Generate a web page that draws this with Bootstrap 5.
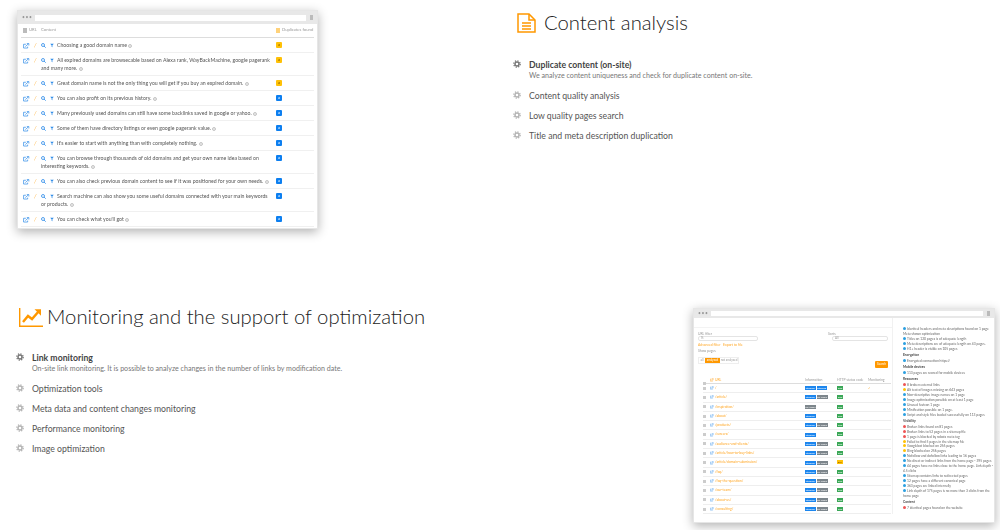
<!DOCTYPE html>
<html lang="en">
<head>
    <meta charset="UTF-8">
    <meta name="viewport" content="width=device-width, initial-scale=1.0">
    <title>Content analysis</title>
    <link href="https://cdn.jsdelivr.net/npm/bootstrap@5.3.2/dist/css/bootstrap.min.css" rel="stylesheet">
    <style>
        body {
            font-family: "Lato", "Liberation Sans", sans-serif;
            background: #fff;
            color: #444;
            overflow: hidden;
        }
        .block-one { height: 295px; }
        .block-two { height: 235px; }
        .left-one { width: 500px; padding: 10px 0 0 17px; }
        .right-one { padding: 13px 0 0 17px; }
        .left-two { width: 693px; padding: 12px 0 0 19px; }
        .feature-title {
            font-size: 20.3px;
            font-weight: 300;
            line-height: 20px;
            height: 20px;
            color: #222;
            margin: 0;
        }
        .title-text { margin-bottom: 2px; }
        .feature-list { margin: 26px 0 0 -4px; padding: 0; list-style: none; }
        .left-two .feature-list { margin: 25px 0 0 -3px; }
        .feature-list li {
            display: flex;
            gap: 8px;
            font-size: 8.7px;
            line-height: 11px;
            margin-bottom: 9px;
            color: #555;
        }
        .feature-list li svg { flex: none; margin-top: 1px; color: #b4b4b4; }
        .feature-list li.is-open { font-weight: 700; color: #444; }
        .feature-list li.is-open svg { color: #777; }
        .feature-list small {
            display: block;
            font-size: 7.1px;
            font-weight: 400;
            color: #777;
        }
        .browser {
            background: #fff;
            border: 1px solid #e6e6e6;
            box-shadow: 0 3px 10px rgba(0, 0, 0, .3);
            filter: blur(.3px);
        }
        .browser-one { width: 301px; height: 219px; }
        .browser-two { width: 302px; height: 215px; margin-top: 13px; }
        .browser-bar { background: #e8e8e8; gap: 4px; padding: 0 4px 0 4px; }
        .browser-one .browser-bar { height: 13px; }
        .browser-two .browser-bar { height: 9px; }
        .browser-dots { width: 9px; flex: none; color: #999; font-size: 5px; line-height: 5px; letter-spacing: .6px; }
        .browser-url { flex: 1; height: 6px; background: #fff; }
        .browser-two .browser-url { height: 5px; }
        .browser-end { width: 3px; height: 5px; background: #bbb; flex: none; }

        .dup-head {
            margin: 0 3px;
            height: 14px;
            border-bottom: 1px solid #ddd;
            font-size: 4.2px;
            color: #999;
            padding-left: 2px;
        }
        .dup-head .dup-content { width: 235px; }
        .dup-sort { width: 4px; height: 5px; background: #bbb; margin-right: 2px; display: inline-block; vertical-align: middle; }
        .dup-flag { width: 4px; height: 5px; background: #ffd27a; margin-right: 2px; display: inline-block; vertical-align: middle; }
        .dup-row {
            margin: 0 3px;
            padding: 3px 0 3px 2px;
            border-bottom: 1px solid #f0f0f0;
            font-size: 5.2px;
            line-height: 8px;
            color: #555;
        }
        .dup-tools { width: 18px; flex: none; }
        .dup-text { width: 234px; flex: none; padding-right: 2.5px; }
        .dup-gap { margin-right: 3px; }
        .dup-slash { color: #ffb74d; margin-left: 4px; font-style: italic; font-size: 5.9px; }
        .dup-mark {
            width: 6px;
            height: 6px;
            border-radius: 1px;
            font-size: 4px;
            line-height: 6px;
            text-align: center;
            margin: 1px 0 0 1px;
        }
        .mark-a { background: #ffc107; color: #704f00; }
        .mark-b { background: #0d7ff0; color: #fff; }
        .tone-blue { color: #2b8ae8; }
        .tone-orange { color: #ff9800; }
        .tone-gray { color: #999; }

        .audit-main { width: 199px; flex: none; border-right: 1px solid #f1f1f1; padding-top: 9px; }
        .audit-side { flex: 1; padding: 1px 0 0 10px; margin-top: 8px; font-size: 3.3px; line-height: 4.9px; color: #666; }
        .audit-side p { margin: 0; }
        .audit-side .side-head { font-weight: 700; color: #444; margin: 1.2px 0; }
        .audit-side i { display: inline-block; width: 3px; height: 3px; border-radius: 50%; margin-right: 1px; }
        .dot-ok { background: #2b9fe0; }
        .dot-bad { background: #e55; }
        .dot-warn { background: #ffc107; }
        .audit-form { border-top: 1px solid #f3f3f3; margin-top: 0; padding: 4px 4px 0 4px; font-size: 3.4px; line-height: 4px; color: #999; }
        .audit-col { width: 60px; }
        .audit-input { height: 5px; border: 1px solid #e4e4e4; border-radius: 2px; background: #fff; padding-left: 2px; font-size: 3px; line-height: 3px; }
        .audit-links { color: #ffa726; margin: 2px 0 2px; }
        .audit-group { width: 41px; height: 6.5px; border: 1px solid #eee; line-height: 4.5px; font-size: 3px; text-align: center; }
        .audit-group span:nth-child(1) { width: 6px; }
        .audit-group span:nth-child(2) { width: 15px; background: #ff9800; color: #fff; }
        .audit-group span:nth-child(3) { flex: 1; }
        .audit-search {
            background: #ff9800;
            color: #fff;
            width: 13px;
            height: 7px;
            border-radius: 1px;
            font-size: 3px;
            line-height: 7px;
            text-align: center;
            margin-left: auto;
            margin-right: 0;
        }
        .url-head, .url-row {
            margin-left: 9px;
            margin-right: 1px;
            font-size: 3.4px;
            color: #999;
            border-bottom: 1px solid #eee;
        }
        .url-head { margin-top: 10px; height: 6px; line-height: 5px; border-bottom-color: #ddd; }
        .url-row { height: 9.3px; line-height: 8.3px; }
        .url-check { width: 3px; height: 3px; background: #ccc; flex: none; margin-right: 4px; }
        .url-name { width: 95px; flex: none; color: #ffa726; }
        .url-name svg { margin-right: 1px; }
        .url-info { width: 32px; flex: none; display: flex; gap: 1px; }
        .url-http { width: 31px; flex: none; }
        .url-tag { display: inline-block; height: 4px; line-height: 4px; font-size: 2.6px; color: #fff; text-align: center; }
        .tag-blue { width: 10.5px; background: #1c86ee; }
        .tag-gray { width: 11px; background: #7d868c; }
        .tag-green { width: 6px; background: #3aa757; }
        .tag-yellow { width: 6px; background: #ffc107; color: #704f00; }
    </style>
</head>
<body>
    <svg width="0" height="0" class="d-block">
        <symbol id="ico-gear" viewBox="0 0 10 10">
            <circle cx="5" cy="5" r="2.5" fill="none" stroke="currentColor" stroke-width="1.8"/>
            <circle cx="5" cy="5" r="4" fill="none" stroke="currentColor" stroke-width="1.6" stroke-dasharray="1.57 1.57"/>
        </symbol>
        <symbol id="ico-ext" viewBox="0 0 12 10">
            <path d="M8 6v2.5H1V2h4" fill="none" stroke="currentColor" stroke-width="1.2"/>
            <path d="M4 6 9 1.5M6.5 .8h3.5v3.4" fill="none" stroke="currentColor" stroke-width="1.2"/>
        </symbol>
        <symbol id="ico-search" viewBox="0 0 10 10">
            <circle cx="4" cy="4" r="3" fill="none" stroke="currentColor" stroke-width="1.6"/>
            <path d="M6.2 6.2 9.3 9.3" stroke="currentColor" stroke-width="1.8"/>
        </symbol>
        <symbol id="ico-funnel" viewBox="0 0 10 10">
            <path d="M.5 .8h9L6 4.6v5L4 8.4V4.6z" fill="currentColor"/>
        </symbol>
        <symbol id="ico-info" viewBox="0 0 10 10">
            <circle cx="5" cy="5" r="3.8" fill="none" stroke="currentColor" stroke-width="1.4"/>
            <path d="M5 3v4" stroke="currentColor" stroke-width="1.2"/>
        </symbol>
    </svg>

    <div class="d-flex block-one">
        <div class="left-one flex-shrink-0">
            <div class="browser browser-one">
                <div class="browser-bar d-flex align-items-center">
                    <span class="browser-dots">•••</span>
                    <span class="browser-url"></span>
                    <span class="browser-end"></span>
                </div>
                <div class="dup-head d-flex align-items-center">
                    <span class="dup-tools"><span class="dup-sort"></span>URL</span>
                    <span class="dup-content">Content</span>
                    <span><span class="dup-flag"></span>Duplicates found</span>
                </div>
                <div id="dupRows"></div>
            </div>
        </div>
        <div class="right-one">
            <h2 class="feature-title d-flex align-items-center gap-2">
                <svg width="19" height="20" viewBox="0 0 19 20" fill="none" stroke="#ff9800" stroke-width="1.5">
                    <path d="M1 1h11l6 6v12H1z"/>
                    <path d="M12 1v6h6M5 10h9M5 13h9M5 16h9"/>
                </svg>
                <span class="title-text">Content analysis</span>
            </h2>
            <ul class="feature-list">
                <li class="is-open"><svg width="8" height="8"><use href="#ico-gear"/></svg><div>Duplicate content (on-site)<small>We analyze content uniqueness and check for duplicate content on-site.</small></div></li>
                <li><svg width="8" height="8"><use href="#ico-gear"/></svg><div>Content quality analysis</div></li>
                <li><svg width="8" height="8"><use href="#ico-gear"/></svg><div>Low quality pages search</div></li>
                <li><svg width="8" height="8"><use href="#ico-gear"/></svg><div>Title and meta description duplication</div></li>
            </ul>
        </div>
    </div>

    <div class="d-flex block-two">
        <div class="left-two flex-shrink-0">
            <h2 class="feature-title d-flex align-items-center gap-1">
                <svg width="24" height="19" viewBox="0 0 24 19" fill="none" stroke="#ff9800">
                    <path d="M.7 0v18.3H24" stroke-width="1.4"/>
                    <path d="M4 14l5-6 4 3 7-8" stroke-width="2.4"/>
                    <path d="M15.5 1.2h6.5v6.5z" fill="#ff9800" stroke="none"/>
                </svg>
                <span class="title-text">Monitoring and the support of optimization</span>
            </h2>
            <ul class="feature-list">
                <li class="is-open"><svg width="8" height="8"><use href="#ico-gear"/></svg><div>Link monitoring<small>On-site link monitoring. It is possible to analyze changes in the number of links by modification date.</small></div></li>
                <li><svg width="8" height="8"><use href="#ico-gear"/></svg><div>Optimization tools</div></li>
                <li><svg width="8" height="8"><use href="#ico-gear"/></svg><div>Meta data and content changes monitoring</div></li>
                <li><svg width="8" height="8"><use href="#ico-gear"/></svg><div>Performance monitoring</div></li>
                <li><svg width="8" height="8"><use href="#ico-gear"/></svg><div>Image optimization</div></li>
            </ul>
        </div>
        <div>
            <div class="browser browser-two">
                <div class="browser-bar d-flex align-items-center">
                    <span class="browser-dots">•••</span>
                    <span class="browser-url"></span>
                    <span class="browser-end"></span>
                </div>
                <div class="d-flex">
                    <div class="audit-main">
                        <div class="audit-form">
                            <div class="d-flex justify-content-between">
                                <div class="audit-col">URL filter<div class="audit-input">%</div></div>
                                <div class="audit-col">Sorts<div class="audit-input ms-1">All</div></div>
                            </div>
                            <div class="audit-links">Advanced filter &nbsp; Export to file</div>
                            <div>Show pages</div>
                            <div class="d-flex align-items-center justify-content-between">
                                <div class="audit-group d-flex">
                                    <span>all</span><span>analyzed</span><span>not analyzed</span>
                                </div>
                                <div class="audit-search mt-2">Search</div>
                            </div>
                        </div>
                        <div class="url-head d-flex">
                            <span class="url-check mt-1"></span>
                            <span class="url-name"><svg width="4" height="4" class="tone-orange"><use href="#ico-ext"/></svg>URL</span>
                            <span class="url-info">Information</span>
                            <span class="url-http">HTTP status code</span>
                            <span>Monitoring</span>
                        </div>
                        <div id="urlRows"></div>
                    </div>
                    <div class="audit-side" id="sideList"></div>
                </div>
            </div>
        </div>
    </div>

    <script src="https://cdn.jsdelivr.net/npm/bootstrap@5.3.2/dist/js/bootstrap.bundle.min.js"></script>
    <script>
        // [text, badge type]
        const dupData = [
            ["Choosing a good domain name", "a"],
            ["All expired domains are browsecable based on Alexa rank, WayBackMachine, google pagerank and many more.", "a"],
            ["Great domain name is not the only thing you will get if you buy an expired domain.", "a"],
            ["You can also profit on its previous history.", "b"],
            ["Many previously used domains can still have some backlinks saved in google or yahoo.", "b"],
            ["Some of them have directory listings or even google pagerank value.", "b"],
            ["It's easier to start with anything than with completely nothing.", "b"],
            ["You can browse through thousands of old domains and get your own name idea based on interesting keywords.", "b"],
            ["You can also check previous domain content to see if it was positioned for your own needs.", "b"],
            ["Search machine can also show you some useful domains connected with your main keywords or products.", "b"],
            ["You can check what you'll got", "b"]
        ];
        let dupHtml = "";
        dupData.forEach((item) => {
            dupHtml += `<div class="dup-row d-flex">
                <div class="dup-tools tone-blue"><svg width="7" height="6"><use href="#ico-ext"/></svg><span class="dup-slash">/</span></div>
                <div class="dup-text"><svg width="5" height="5" class="tone-blue me-1"><use href="#ico-search"/></svg><svg width="4" height="5" class="tone-blue dup-gap"><use href="#ico-funnel"/></svg>${item[0]} <svg width="4" height="4" class="tone-gray"><use href="#ico-info"/></svg></div>
                <div class="dup-mark mark-${item[1]}">a</div>
            </div>`;
        });
        document.getElementById("dupRows").innerHTML = dupHtml;

        // [url, info tags, http tag, monitoring]
        const urlData = [
            ["/", "bb", "g", 1], ["/article/", "bk", "g"], ["/inspiration/", "k", "g"],
            ["/about/", "b", "g"], ["/products/", "bk", "g"], ["/careers/", "b", "g"],
            ["/audience-and-clients/", "bk", "g"], ["/article/how-to-buy-links/", "bk", "g"],
            ["/article/domain-submission/", "bk", "y"], ["/faq/", "bk", "g"],
            ["/faq-the-question/", "bk", "g"], ["/our-team/", "bk", "g"],
            ["/about-us/", "bk", "g"], ["/consulting/", "bk", "g"]
        ];
        let urlHtml = "";
        urlData.forEach((row) => {
            let tags = "";
            for (const t of row[1]) {
                tags += t === "b" ? '<span class="url-tag tag-blue">sitemap</span>' : '<span class="url-tag tag-gray">no-index</span>';
            }
            const http = row[2] === "g" ? '<span class="url-tag tag-green">200</span>' : '<span class="url-tag tag-yellow">301</span>';
            urlHtml += `<div class="url-row d-flex align-items-center">
                <span class="url-check"></span>
                <span class="url-name"><svg width="4" height="4" class="tone-blue"><use href="#ico-ext"/></svg>${row[0]}</span>
                <span class="url-info">${tags}</span>
                <span class="url-http">${http}</span>
                <span class="tone-orange">${row[3] ? "✓" : ""}</span>
            </div>`;
        });
        document.getElementById("urlRows").innerHTML = urlHtml;

        // "h" heading, "o" ok, "x" error, "w" warning
        const sideData = [
            ["o", "Identical headers and meta descriptions found on 1 page"],
            ["", "Meta shown optimization"],
            ["o", "Titles on 120 pages is of adequate length"],
            ["o", "Meta descriptions are of adequate length on 43 pages."],
            ["o", "H1+ header is visible on 105 pages"],
            ["h", "Encryption"],
            ["o", "Encrypted connection https://"],
            ["h", "Mobile devices"],
            ["o", "113 pages are scored for mobile devices"],
            ["h", "Resources"],
            ["x", "8 broken external links"],
            ["w", "Alt text of images missing on 643 pages"],
            ["o", "Non-descriptive image names on 1 page"],
            ["o", "Image optimization possible on at least 1 page"],
            ["o", "Unused favicon 1 page"],
            ["o", "Minification possible on 1 page."],
            ["o", "Script and style files loaded successfully on 113 pages"],
            ["h", "Visibility"],
            ["x", "Broken links found on 81 pages"],
            ["x", "Broken links to 52 pages in a sitemap file"],
            ["x", "1 page is blocked by robots meta tag"],
            ["w", "Failed to find 5 pages in the sitemap file"],
            ["w", "Googlebot blocked on 256 pages"],
            ["w", "Bing blocked on 256 pages"],
            ["o", "Nofollow and dofollow links leading to 16 pages"],
            ["o", "No direct or indirect links from the home page - 395 pages"],
            ["o", "44 pages have no links close to the home page. Link depth - 4.5 clicks"],
            ["o", "Sitemap contains links to redirected pages"],
            ["o", "12 pages have a different canonical page"],
            ["o", "363 pages are linked internally"],
            ["o", "Link depth of 175 pages is no more than 3 clicks from the home page"],
            ["h", "Content"],
            ["x", "7 identical pages found on the website"]
        ];
        const dotClass = { o: "dot-ok", x: "dot-bad", w: "dot-warn" };
        let sideHtml = "";
        sideData.forEach((line) => {
            if (line[0] === "h") {
                sideHtml += `<p class="side-head">${line[1]}</p>`;
            } else if (line[0] === "") {
                sideHtml += `<p>${line[1]}</p>`;
            } else {
                sideHtml += `<p><i class="${dotClass[line[0]]}"></i>${line[1]}</p>`;
            }
        });
        document.getElementById("sideList").innerHTML = sideHtml;
    </script>
</body>
</html>
